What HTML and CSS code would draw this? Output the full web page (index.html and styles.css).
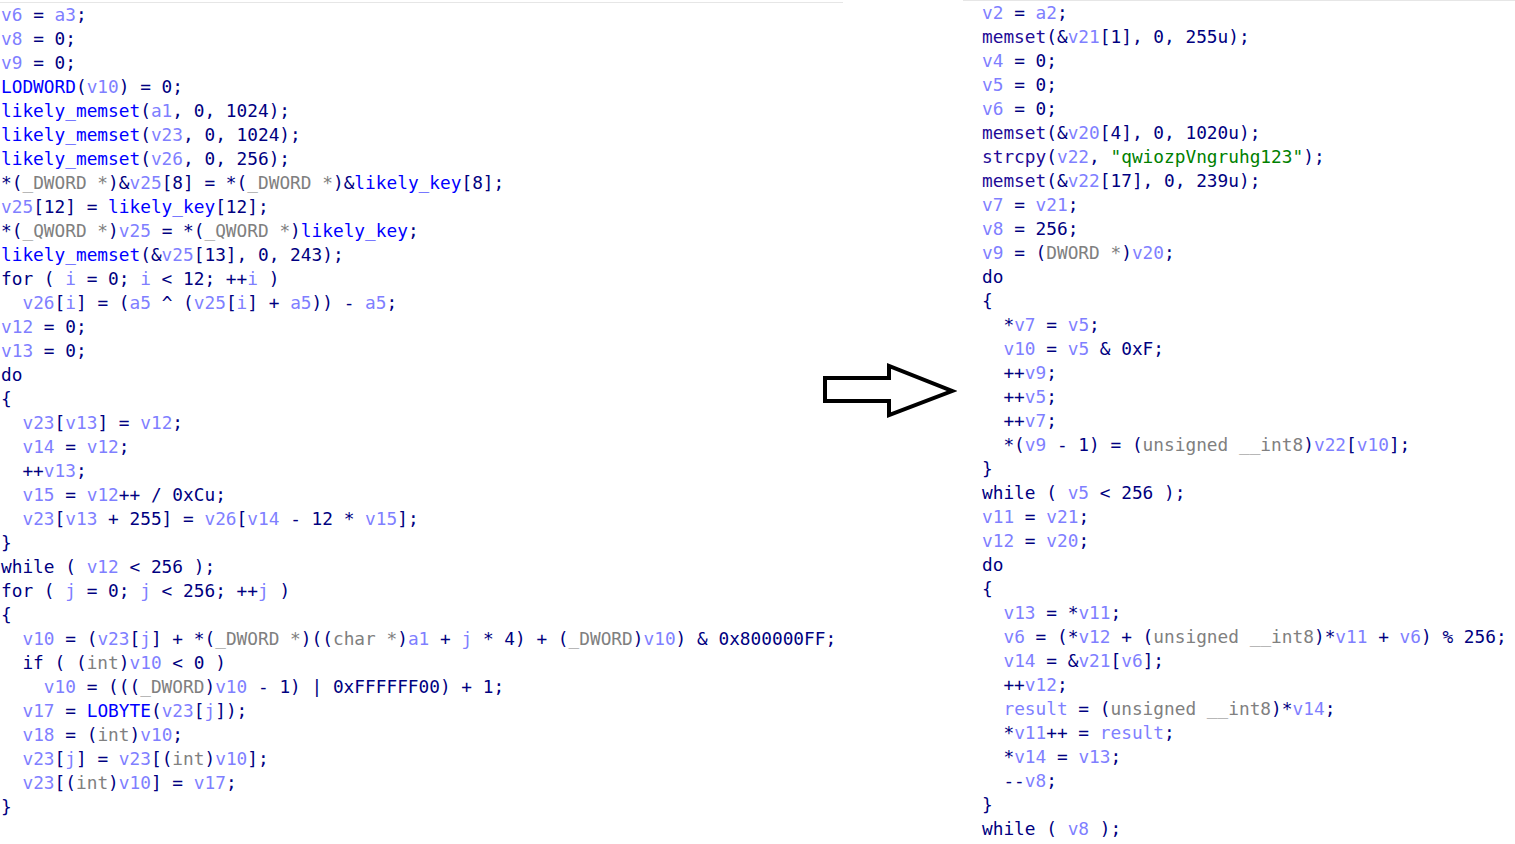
FILE: index.html
```html
<!DOCTYPE html>
<html>
<head>
<meta charset="utf-8">
<link rel="stylesheet" href="styles.css">
</head>
<body>
<div class="page">
  <div class="panel left">
<div class="ln"><span class="v">v6</span> = <span class="v">a3</span>;</div>
<div class="ln"><span class="v">v8</span> = 0;</div>
<div class="ln"><span class="v">v9</span> = 0;</div>
<div class="ln"><span class="f">LODWORD</span>(<span class="v">v10</span>) = 0;</div>
<div class="ln"><span class="f">likely_memset</span>(<span class="v">a1</span>, 0, 1024);</div>
<div class="ln"><span class="f">likely_memset</span>(<span class="v">v23</span>, 0, 1024);</div>
<div class="ln"><span class="f">likely_memset</span>(<span class="v">v26</span>, 0, 256);</div>
<div class="ln">*(<span class="t">_DWORD *</span>)&amp;<span class="v">v25</span>[8] = *(<span class="t">_DWORD *</span>)&amp;<span class="f">likely_key</span>[8];</div>
<div class="ln"><span class="v">v25</span>[12] = <span class="f">likely_key</span>[12];</div>
<div class="ln">*(<span class="t">_QWORD *</span>)<span class="v">v25</span> = *(<span class="t">_QWORD *</span>)<span class="f">likely_key</span>;</div>
<div class="ln"><span class="f">likely_memset</span>(&amp;<span class="v">v25</span>[13], 0, 243);</div>
<div class="ln">for ( <span class="v">i</span> = 0; <span class="v">i</span> &lt; 12; ++<span class="v">i</span> )</div>
<div class="ln">  <span class="v">v26</span>[<span class="v">i</span>] = (<span class="v">a5</span> ^ (<span class="v">v25</span>[<span class="v">i</span>] + <span class="v">a5</span>)) - <span class="v">a5</span>;</div>
<div class="ln"><span class="v">v12</span> = 0;</div>
<div class="ln"><span class="v">v13</span> = 0;</div>
<div class="ln">do</div>
<div class="ln">{</div>
<div class="ln">  <span class="v">v23</span>[<span class="v">v13</span>] = <span class="v">v12</span>;</div>
<div class="ln">  <span class="v">v14</span> = <span class="v">v12</span>;</div>
<div class="ln">  ++<span class="v">v13</span>;</div>
<div class="ln">  <span class="v">v15</span> = <span class="v">v12</span>++ / 0xCu;</div>
<div class="ln">  <span class="v">v23</span>[<span class="v">v13</span> + 255] = <span class="v">v26</span>[<span class="v">v14</span> - 12 * <span class="v">v15</span>];</div>
<div class="ln">}</div>
<div class="ln">while ( <span class="v">v12</span> &lt; 256 );</div>
<div class="ln">for ( <span class="v">j</span> = 0; <span class="v">j</span> &lt; 256; ++<span class="v">j</span> )</div>
<div class="ln">{</div>
<div class="ln">  <span class="v">v10</span> = (<span class="v">v23</span>[<span class="v">j</span>] + *(<span class="t">_DWORD *</span>)((<span class="t">char *</span>)<span class="v">a1</span> + <span class="v">j</span> * 4) + (<span class="t">_DWORD</span>)<span class="v">v10</span>) &amp; 0x800000FF;</div>
<div class="ln">  if ( (<span class="t">int</span>)<span class="v">v10</span> &lt; 0 )</div>
<div class="ln">    <span class="v">v10</span> = (((<span class="t">_DWORD</span>)<span class="v">v10</span> - 1) | 0xFFFFFF00) + 1;</div>
<div class="ln">  <span class="v">v17</span> = <span class="f">LOBYTE</span>(<span class="v">v23</span>[<span class="v">j</span>]);</div>
<div class="ln">  <span class="v">v18</span> = (<span class="t">int</span>)<span class="v">v10</span>;</div>
<div class="ln">  <span class="v">v23</span>[<span class="v">j</span>] = <span class="v">v23</span>[(<span class="t">int</span>)<span class="v">v10</span>];</div>
<div class="ln">  <span class="v">v23</span>[(<span class="t">int</span>)<span class="v">v10</span>] = <span class="v">v17</span>;</div>
<div class="ln">}</div>
  </div>
  <div class="middle">
    <svg class="arrow" width="136" height="62" viewBox="0 0 136 62">
      <polygon points="4,18 68,18 68,6 131,31 68,55 68,41 4,41" fill="#fff" stroke="#000" stroke-width="4" stroke-linejoin="miter"/>
    </svg>
  </div>
  <div class="panel right">
<div class="ln"><span class="v">v2</span> = <span class="v">a2</span>;</div>
<div class="ln"><span class="lf">memset</span>(&amp;<span class="v">v21</span>[1], 0, 255u);</div>
<div class="ln"><span class="v">v4</span> = 0;</div>
<div class="ln"><span class="v">v5</span> = 0;</div>
<div class="ln"><span class="v">v6</span> = 0;</div>
<div class="ln"><span class="lf">memset</span>(&amp;<span class="v">v20</span>[4], 0, 1020u);</div>
<div class="ln"><span class="lf">strcpy</span>(<span class="v">v22</span>, <span class="s">"qwiozpVngruhg123"</span>);</div>
<div class="ln"><span class="lf">memset</span>(&amp;<span class="v">v22</span>[17], 0, 239u);</div>
<div class="ln"><span class="v">v7</span> = <span class="v">v21</span>;</div>
<div class="ln"><span class="v">v8</span> = 256;</div>
<div class="ln"><span class="v">v9</span> = (<span class="t">DWORD *</span>)<span class="v">v20</span>;</div>
<div class="ln">do</div>
<div class="ln">{</div>
<div class="ln">  *<span class="v">v7</span> = <span class="v">v5</span>;</div>
<div class="ln">  <span class="v">v10</span> = <span class="v">v5</span> &amp; 0xF;</div>
<div class="ln">  ++<span class="v">v9</span>;</div>
<div class="ln">  ++<span class="v">v5</span>;</div>
<div class="ln">  ++<span class="v">v7</span>;</div>
<div class="ln">  *(<span class="v">v9</span> - 1) = (<span class="t">unsigned __int8</span>)<span class="v">v22</span>[<span class="v">v10</span>];</div>
<div class="ln">}</div>
<div class="ln">while ( <span class="v">v5</span> &lt; 256 );</div>
<div class="ln"><span class="v">v11</span> = <span class="v">v21</span>;</div>
<div class="ln"><span class="v">v12</span> = <span class="v">v20</span>;</div>
<div class="ln">do</div>
<div class="ln">{</div>
<div class="ln">  <span class="v">v13</span> = *<span class="v">v11</span>;</div>
<div class="ln">  <span class="v">v6</span> = (*<span class="v">v12</span> + (<span class="t">unsigned __int8</span>)*<span class="v">v11</span> + <span class="v">v6</span>) % 256;</div>
<div class="ln">  <span class="v">v14</span> = &amp;<span class="v">v21</span>[<span class="v">v6</span>];</div>
<div class="ln">  ++<span class="v">v12</span>;</div>
<div class="ln">  <span class="v">result</span> = (<span class="t">unsigned __int8</span>)*<span class="v">v14</span>;</div>
<div class="ln">  *<span class="v">v11</span>++ = <span class="v">result</span>;</div>
<div class="ln">  *<span class="v">v14</span> = <span class="v">v13</span>;</div>
<div class="ln">  --<span class="v">v8</span>;</div>
<div class="ln">}</div>
<div class="ln">while ( <span class="v">v8</span> );</div>
  </div>
</div>
</body>
</html>
```

FILE: styles.css
```css
html, body {
  margin: 0;
  padding: 0;
  background: #ffffff;
}

.page {
  display: grid;
  grid-template-columns: 843px 120px 1fr;
  width: 1515px;
  height: 844px;
  overflow: hidden;
}

.panel {
  font-family: "DejaVu Sans Mono", "Liberation Mono", monospace;
  font-size: 17.8px;
  line-height: 24px;
  color: #000080;
  border-top: 1px solid #e6e6e6;
}

.left {
  margin-top: 2px;
  padding-left: 1px;
}

.right {
  margin-top: 0;
  padding-left: 19px;
}

.ln {
  white-space: pre;
  line-height: 24px;
}

.v { color: #7f7fff; }
.f { color: #0000ff; }
.lf { color: #1e0a96; }
.t { color: #808080; }
.s { color: #008000; }

.middle {
  padding-top: 360px;
}

.arrow {
  display: block;
  margin-left: -22px;
}
```
